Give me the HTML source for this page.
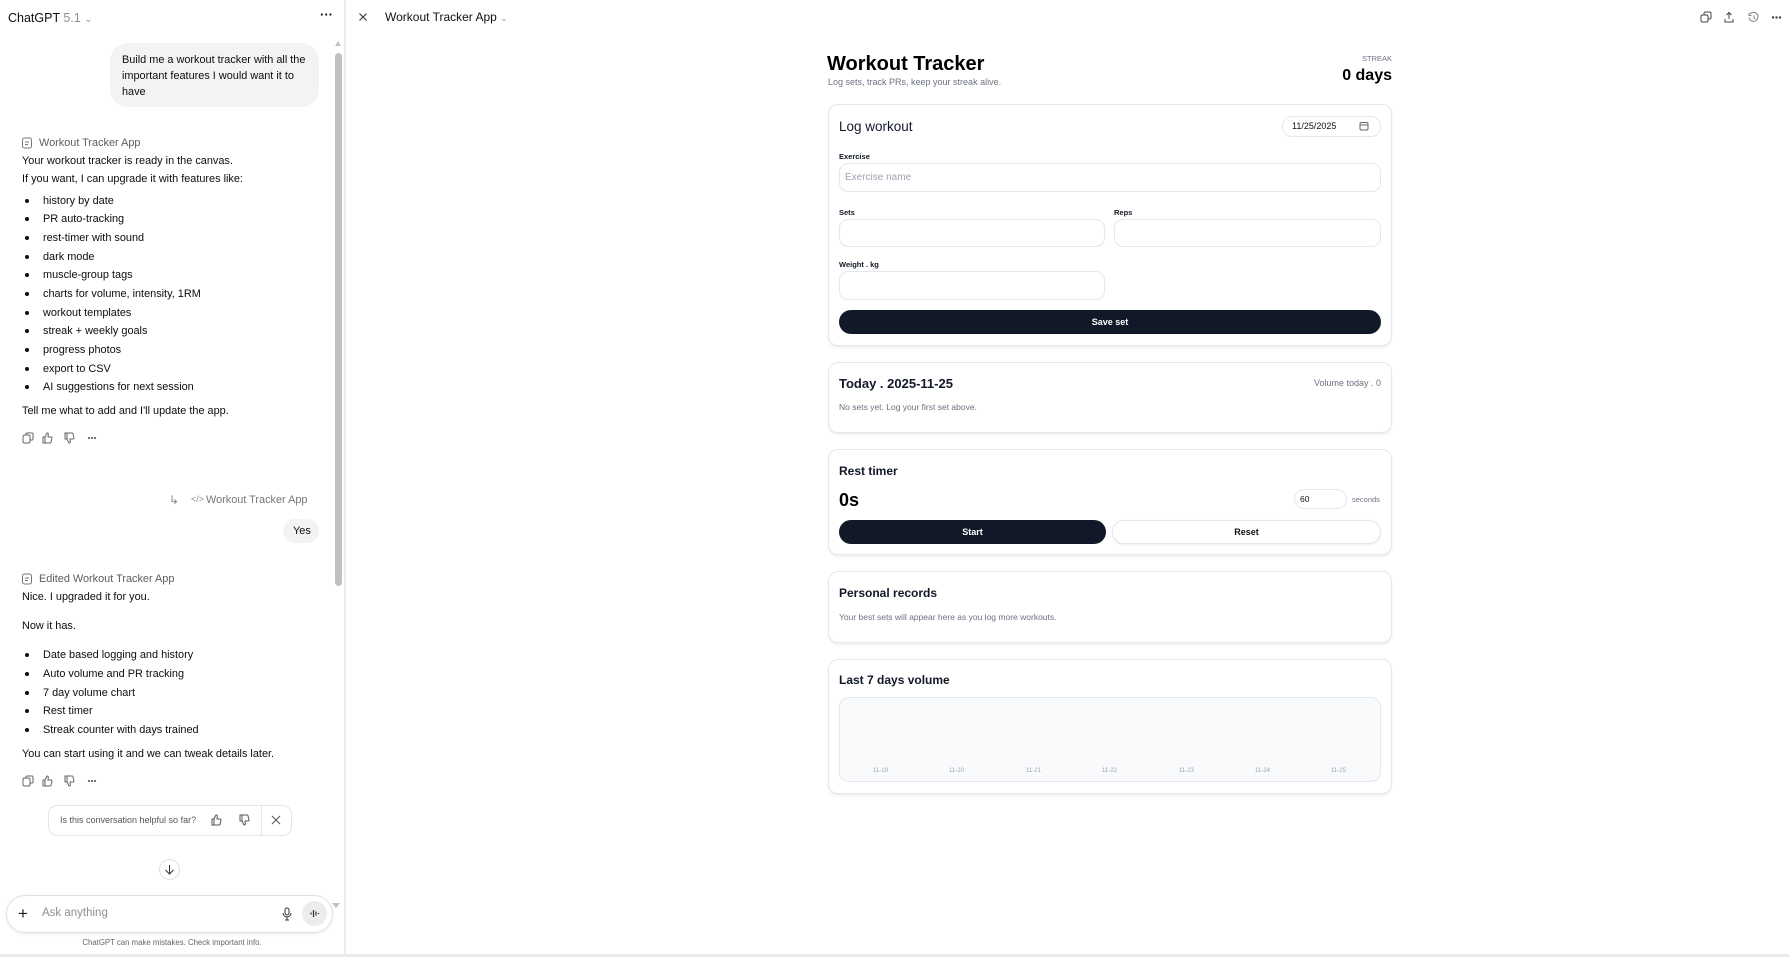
<!DOCTYPE html>
<html><head><meta charset="utf-8"><style>
*{box-sizing:border-box;margin:0;padding:0}
body{width:1789px;height:957px;background:#fff;font-family:"Liberation Sans",sans-serif;color:#0d0d0d;position:relative;overflow:hidden}
.a{position:absolute;white-space:nowrap}
.t{font-size:10.9px;line-height:14px}
.li{font-size:10.9px;line-height:14px}
.dot{position:absolute;width:4px;height:4px;border-radius:50%;background:#0d0d0d}
.card{position:absolute;left:828px;width:564px;border:1px solid #e3e7ee;border-radius:10px;box-shadow:0 2px 2px rgba(0,0,0,.06);background:#fff}
.inp{position:absolute;border:1px solid #e3e7ee;border-radius:9px;background:#fff}
.lbl{font-size:7.5px;font-weight:bold;color:#111827}
.ct{font-size:13.5px;color:#111827}
.g{color:#6b7280}
svg{position:absolute}
</style></head><body>
<!-- left panel -->
<div class="a" style="left:8px;top:11px;font-size:12.5px">ChatGPT <span style="color:#8f8f8f">5.1</span> <span style="color:#999;font-size:10px">&#8964;</span></div>
<div class="a" style="left:320px;top:7px;font-size:13px;font-weight:bold;letter-spacing:0px">···</div>
<div class="a" style="left:344px;top:0;width:2px;height:957px;background:#ececec"></div>
<div class="a" style="left:335px;top:53px;width:7px;height:533px;border-radius:4px;background:#c1c1c1"></div>
<div class="a" style="left:335px;top:41px;width:0;height:0;border-left:3.5px solid transparent;border-right:3.5px solid transparent;border-bottom:5px solid #c1c1c1"></div>
<div class="a" style="left:332px;top:903px;width:0;height:0;border-left:4px solid transparent;border-right:4px solid transparent;border-top:5px solid #c1c1c1"></div>

<div class="a" style="left:110px;top:43px;width:209px;height:64px;background:#f3f3f3;border-radius:18px"></div>
<div class="a t" style="left:122px;top:52px;line-height:16px;white-space:normal;width:190px">Build me a workout tracker with all the important features I would want it to have</div>

<svg style="left:21px;top:137px" width="12" height="12" viewBox="0 0 12 12"><rect x="1.5" y="1" width="9" height="10" rx="2" fill="none" stroke="#777"/><path d="M4 5h4M4 7.5h3" stroke="#777"/></svg>
<div class="a t" style="left:39px;top:136px;color:#5d5d5d">Workout Tracker App</div>
<div class="a t" style="left:22px;top:154px">Your workout tracker is ready in the canvas.</div>
<div class="a t" style="left:22px;top:172px">If you want, I can upgrade it with features like:</div>
<div class="dot" style="left:25px;top:199px"></div><div class="a li" style="left:43px;top:194px">history by date</div>
<div class="dot" style="left:25px;top:217px"></div><div class="a li" style="left:43px;top:212px">PR auto-tracking</div>
<div class="dot" style="left:25px;top:236px"></div><div class="a li" style="left:43px;top:231px">rest-timer with sound</div>
<div class="dot" style="left:25px;top:255px"></div><div class="a li" style="left:43px;top:250px">dark mode</div>
<div class="dot" style="left:25px;top:273px"></div><div class="a li" style="left:43px;top:268px">muscle-group tags</div>
<div class="dot" style="left:25px;top:292px"></div><div class="a li" style="left:43px;top:287px">charts for volume, intensity, 1RM</div>
<div class="dot" style="left:25px;top:311px"></div><div class="a li" style="left:43px;top:306px">workout templates</div>
<div class="dot" style="left:25px;top:329px"></div><div class="a li" style="left:43px;top:324px">streak + weekly goals</div>
<div class="dot" style="left:25px;top:348px"></div><div class="a li" style="left:43px;top:343px">progress photos</div>
<div class="dot" style="left:25px;top:367px"></div><div class="a li" style="left:43px;top:362px">export to CSV</div>
<div class="dot" style="left:25px;top:385px"></div><div class="a li" style="left:43px;top:380px">AI suggestions for next session</div>
<div class="a t" style="left:22px;top:404px">Tell me what to add and I'll update the app.</div>

<svg style="left:22px;top:432px" width="90" height="12" viewBox="0 0 90 12" fill="none" stroke="#666" stroke-width="1"><rect x="1" y="3" width="7" height="8" rx="1.5"/><path d="M4 3V2a1 1 0 011-1h5a1 1 0 011 1v5a1 1 0 01-1 1H8"/><path d="M23 5v6h-2V5zM23 5l2-4c1 0 1.5.5 1.3 1.5L26 5h3a1 1 0 011 1l-1 4a1 1 0 01-1 1h-5"/><path d="M45 7V1h-2v6zM45 7l2 4c1 0 1.5-.5 1.3-1.5L48 7h3a1 1 0 001-1l-1-4a1 1 0 00-1-1h-5"/><circle cx="67" cy="6" r=".6" fill="#666"/><circle cx="70" cy="6" r=".6" fill="#666"/><circle cx="73" cy="6" r=".6" fill="#666"/></svg>

<div class="a" style="left:169px;top:493px;font-size:12px;color:#888">&#8627;</div>
<div class="a" style="left:191px;top:494px;font-size:9px;color:#888">&lt;/&gt;</div>
<div class="a t" style="left:206px;top:493px;color:#777">Workout Tracker App</div>
<div class="a" style="left:283px;top:519px;width:36px;height:24px;border-radius:12px;background:#f3f3f3"></div>
<div class="a t" style="left:293px;top:524px">Yes</div>

<svg style="left:21px;top:573px" width="12" height="12" viewBox="0 0 12 12"><rect x="1.5" y="1" width="9" height="10" rx="2" fill="none" stroke="#777"/><path d="M4 5h4M4 7.5h3" stroke="#777"/></svg>
<div class="a t" style="left:39px;top:572px;color:#5d5d5d">Edited Workout Tracker App</div>
<div class="a t" style="left:22px;top:590px">Nice. I upgraded it for you.</div>
<div class="a t" style="left:22px;top:619px">Now it has.</div>
<div class="dot" style="left:25px;top:653px"></div><div class="a li" style="left:43px;top:648px">Date based logging and history</div>
<div class="dot" style="left:25px;top:672px"></div><div class="a li" style="left:43px;top:667px">Auto volume and PR tracking</div>
<div class="dot" style="left:25px;top:691px"></div><div class="a li" style="left:43px;top:686px">7 day volume chart</div>
<div class="dot" style="left:25px;top:709px"></div><div class="a li" style="left:43px;top:704px">Rest timer</div>
<div class="dot" style="left:25px;top:728px"></div><div class="a li" style="left:43px;top:723px">Streak counter with days trained</div>
<div class="a t" style="left:22px;top:747px">You can start using it and we can tweak details later.</div>
<svg style="left:22px;top:775px" width="90" height="12" viewBox="0 0 90 12" fill="none" stroke="#666" stroke-width="1"><rect x="1" y="3" width="7" height="8" rx="1.5"/><path d="M4 3V2a1 1 0 011-1h5a1 1 0 011 1v5a1 1 0 01-1 1H8"/><path d="M23 5v6h-2V5zM23 5l2-4c1 0 1.5.5 1.3 1.5L26 5h3a1 1 0 011 1l-1 4a1 1 0 01-1 1h-5"/><path d="M45 7V1h-2v6zM45 7l2 4c1 0 1.5-.5 1.3-1.5L48 7h3a1 1 0 001-1l-1-4a1 1 0 00-1-1h-5"/><circle cx="67" cy="6" r=".6" fill="#666"/><circle cx="70" cy="6" r=".6" fill="#666"/><circle cx="73" cy="6" r=".6" fill="#666"/></svg>

<div class="a" style="left:48px;top:805px;width:244px;height:31px;border:1px solid #e5e5e5;border-radius:9px"></div>
<div class="a" style="left:261px;top:806px;width:1px;height:29px;background:#e5e5e5"></div>
<div class="a" style="left:60px;top:815px;font-size:9px;color:#555">Is this conversation helpful so far?</div>
<svg style="left:211px;top:814px" width="42" height="12" viewBox="0 0 42 12" fill="none" stroke="#555"><path d="M3 5v6H1V5zM3 5l2-4c1 0 1.5.5 1.3 1.5L6 5h3a1 1 0 011 1l-1 4a1 1 0 01-1 1H3"/><path d="M31 7V1h-2v6zM31 7l2 4c1 0 1.5-.5 1.3-1.5L34 7h3a1 1 0 001-1l-1-4a1 1 0 00-1-1h-6"/></svg>
<svg style="left:271px;top:815px" width="10" height="10" viewBox="0 0 10 10" stroke="#555"><path d="M1 1l8 8M9 1L1 9"/></svg>
<div class="a" style="left:159px;top:859px;width:21px;height:21px;border:1px solid #e0e0e0;border-radius:50%"></div>
<svg style="left:164px;top:864px" width="11" height="11" viewBox="0 0 11 11" fill="none" stroke="#333"><path d="M5.5 1v9M1.5 6l4 4 4-4"/></svg>

<div class="a" style="left:6px;top:895px;width:327px;height:38px;border:1px solid #e0e0e0;border-radius:20px;box-shadow:0 1px 3px rgba(0,0,0,.08)"></div>
<div class="a" style="left:18px;top:904px;font-size:17px;color:#222">+</div>
<div class="a" style="left:42px;top:907px;font-size:11.5px;color:#8f8f8f">Ask anything</div>
<svg style="left:281px;top:907px" width="12" height="14" viewBox="0 0 12 14" fill="none" stroke="#333"><rect x="4" y="1" width="4" height="7" rx="2"/><path d="M2 6a4 4 0 008 0M6 10v3M4 13h4"/></svg>
<div class="a" style="left:302px;top:901px;width:25px;height:25px;border-radius:50%;background:#ececec"></div>
<svg style="left:308px;top:907px" width="13" height="13" viewBox="0 0 13 13" stroke="#333" stroke-width="1.2"><path d="M3 5.5v2M5.5 3v7M8 4.5v4M10.5 6v1"/></svg>
<div class="a" style="left:0;top:938px;width:344px;text-align:center;font-size:7.8px;color:#666">ChatGPT can make mistakes. Check important info.</div>
<div class="a" style="left:0;top:954px;width:1789px;height:3px;background:#eaeaea"></div>

<!-- right header -->
<svg style="left:359px;top:13px" width="8" height="8" viewBox="0 0 8 8" stroke="#333" stroke-width="1.1"><path d="M0.5 .5l7 7M7.5 .5l-7 7"/></svg>
<div class="a" style="left:385px;top:10px;font-size:12px;color:#111">Workout Tracker App <span style="color:#999;font-size:9px">&#8964;</span></div>
<svg style="left:1700px;top:11px" width="84" height="13" viewBox="0 0 84 13" fill="none" stroke="#444"><rect x="1" y="4" width="7" height="7" rx="1.5"/><path d="M4 4V2.5A1.5 1.5 0 015.5 1h4A1.5 1.5 0 0111 2.5v4A1.5 1.5 0 019.5 8H8"/><path d="M29 8V1.5M26.5 4L29 1.5 31.5 4M25 8v3h8V8"/><path d="M50 3a4.5 4.5 0 11-1 3.5M49 2v2.5h2.5M54 4.5V7l1.5 1" stroke="#888"/><circle cx="73" cy="6.5" r=".7" fill="#444"/><circle cx="76.5" cy="6.5" r=".7" fill="#444"/><circle cx="80" cy="6.5" r=".7" fill="#444"/></svg>

<!-- app -->
<div class="a" style="left:827px;top:53px;font-size:20px;font-weight:bold;color:#000">Workout Tracker</div>
<div class="a" style="left:828px;top:77px;font-size:9px;color:#6b7280">Log sets, track PRs, keep your streak alive.</div>
<div class="a" style="left:1300px;top:54px;width:92px;text-align:right;font-size:7.5px;color:#6b7280">STREAK</div>
<div class="a" style="left:1280px;top:67px;width:112px;text-align:right;font-size:16px;font-weight:bold;color:#000">0 days</div>

<div class="card" style="top:104px;height:242px"></div>
<div class="a ct" style="left:839px;top:119px">Log workout</div>
<div class="inp" style="left:1282px;top:116px;width:99px;height:21px;border-radius:10px"></div>
<div class="a" style="left:1292px;top:121px;font-size:9px;color:#111">11/25/2025</div>
<svg style="left:1359px;top:121px" width="10" height="10" viewBox="0 0 10 10" fill="none" stroke="#666"><rect x="1" y="1.5" width="8" height="7.5" rx="1.5"/><path d="M1 4h8"/></svg>
<div class="a lbl" style="left:839px;top:152px">Exercise</div>
<div class="inp" style="left:839px;top:163px;width:542px;height:29px"></div>
<div class="a" style="left:845px;top:172px;font-size:10px;color:#9ca3af">Exercise name</div>
<div class="a lbl" style="left:839px;top:208px">Sets</div>
<div class="inp" style="left:839px;top:219px;width:266px;height:28px"></div>
<div class="a lbl" style="left:1114px;top:208px">Reps</div>
<div class="inp" style="left:1114px;top:219px;width:267px;height:28px"></div>
<div class="a lbl" style="left:839px;top:260px">Weight . kg</div>
<div class="inp" style="left:839px;top:271px;width:266px;height:29px"></div>
<div class="a" style="left:839px;top:310px;width:542px;height:24px;border-radius:12px;background:#111827;color:#fff;font-size:9px;font-weight:bold;text-align:center;line-height:24px">Save set</div>

<div class="card" style="top:362px;height:71px"></div>
<div class="a ct" style="left:839px;top:376px;font-weight:bold;font-size:13px">Today . 2025-11-25</div>
<div class="a g" style="left:1250px;top:378px;width:131px;text-align:right;font-size:9px">Volume today . 0</div>
<div class="a g" style="left:839px;top:402px;font-size:8.5px">No sets yet. Log your first set above.</div>

<div class="card" style="top:449px;height:106px"></div>
<div class="a ct" style="left:839px;top:464px;font-weight:bold;font-size:12px">Rest timer</div>
<div class="a" style="left:839px;top:490px;font-size:18px;font-weight:bold;color:#000">0s</div>
<div class="inp" style="left:1294px;top:489px;width:53px;height:20px;border-radius:10px"></div>
<div class="a" style="left:1300px;top:494px;font-size:8.5px;color:#111">60</div>
<div class="a g" style="left:1352px;top:495px;font-size:7.5px">seconds</div>
<div class="a" style="left:839px;top:520px;width:267px;height:24px;border-radius:12px;background:#111827;color:#fff;font-size:9px;font-weight:bold;text-align:center;line-height:24px">Start</div>
<div class="a" style="left:1112px;top:520px;width:269px;height:24px;border-radius:12px;border:1px solid #e3e7ee;box-shadow:0 1px 2px rgba(0,0,0,.08);color:#111;font-size:9px;font-weight:bold;text-align:center;line-height:22px">Reset</div>

<div class="card" style="top:571px;height:72px"></div>
<div class="a ct" style="left:839px;top:586px;font-weight:bold;font-size:12px">Personal records</div>
<div class="a g" style="left:839px;top:612px;font-size:8.5px">Your best sets will appear here as you log more workouts.</div>

<div class="card" style="top:659px;height:135px"></div>
<div class="a ct" style="left:839px;top:673px;font-weight:bold;font-size:12px">Last 7 days volume</div>
<div class="a" style="left:839px;top:697px;width:542px;height:85px;border:1px solid #e3e7ee;border-radius:10px;background:#f9fafb"></div>
<div class="a" style="left:873px;top:768px;font-size:6px;color:#9ca3af">11-19</div>
<div class="a" style="left:949px;top:768px;font-size:6px;color:#9ca3af">11-20</div>
<div class="a" style="left:1026px;top:768px;font-size:6px;color:#9ca3af">11-21</div>
<div class="a" style="left:1102px;top:768px;font-size:6px;color:#9ca3af">11-22</div>
<div class="a" style="left:1179px;top:768px;font-size:6px;color:#9ca3af">11-23</div>
<div class="a" style="left:1255px;top:768px;font-size:6px;color:#9ca3af">11-24</div>
<div class="a" style="left:1331px;top:768px;font-size:6px;color:#9ca3af">11-25</div>
</body></html>
